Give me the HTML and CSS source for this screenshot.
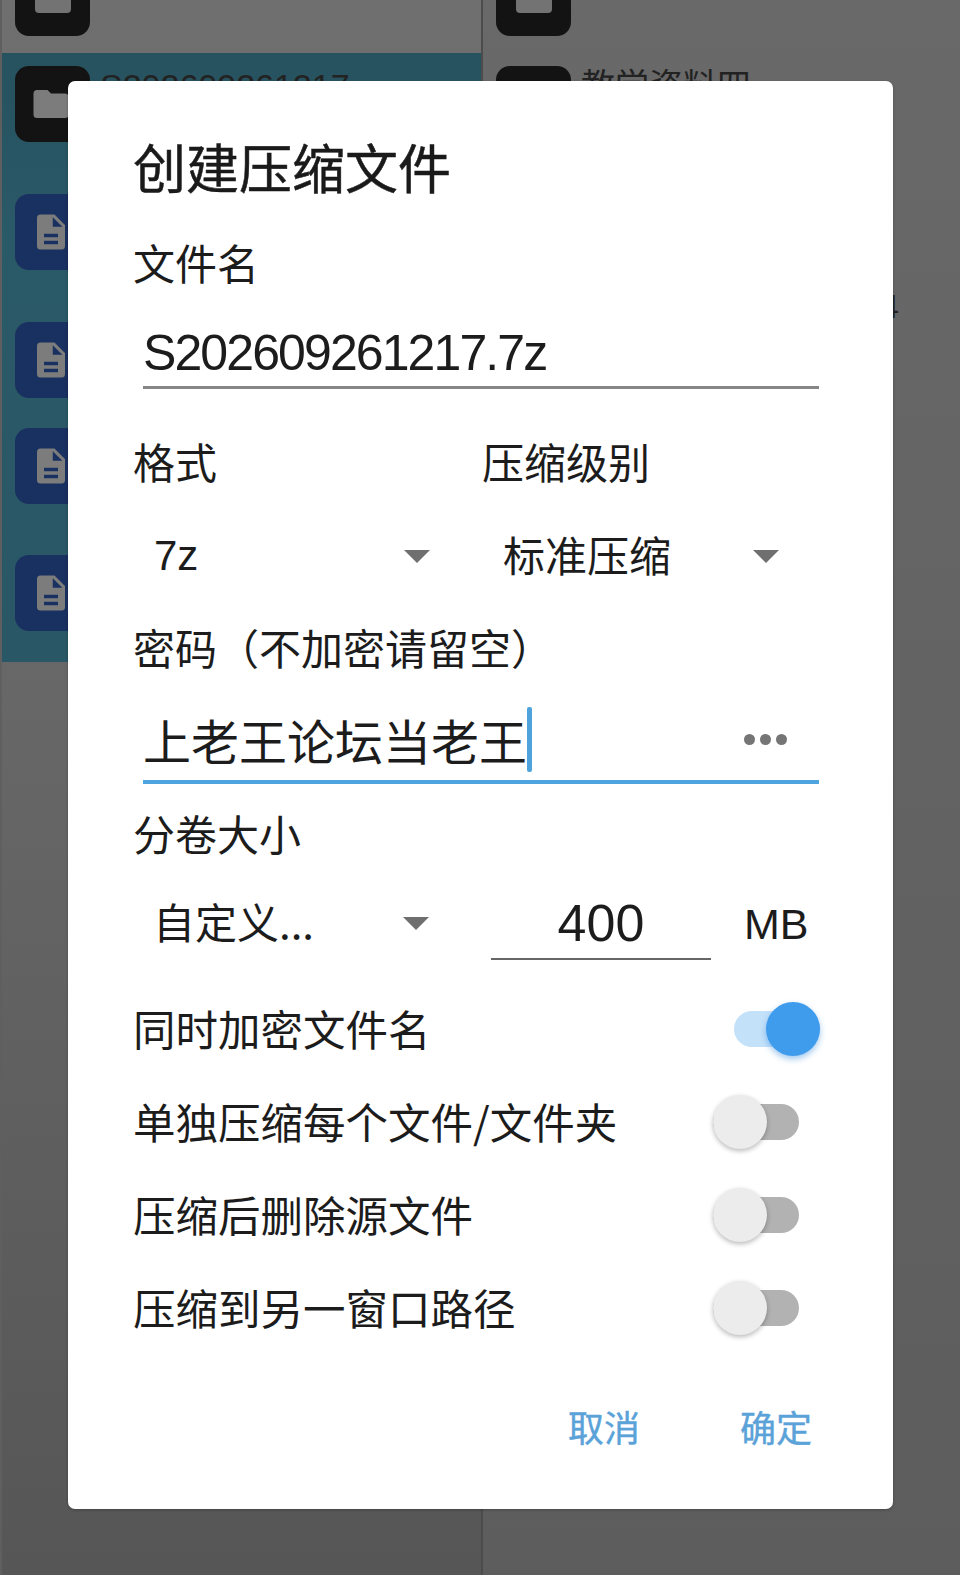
FILE: index.html
```html
<!DOCTYPE html>
<html lang="zh-CN">
<head>
<meta charset="utf-8">
<title>创建压缩文件</title>
<link rel="stylesheet" href="styles.css">
</head>
<body>
<div class="screen">
  <div class="pane pane-left">
    <div class="row row-top"><div class="tile tile-black tile-cut"><span class="notch"></span></div></div>
    <div class="selected">
      <div class="row row-folder">
        <div class="tile tile-black">
          <svg class="glyph" viewBox="0 0 24 24"><path d="M10 4H4a2 2 0 0 0-2 2v12a2 2 0 0 0 2 2h16a2 2 0 0 0 2-2V8a2 2 0 0 0-2-2h-8z"/></svg>
        </div>
        <div class="name">S202609261217</div>
      </div>
      <div class="row row-doc"><div class="tile tile-navy"><svg class="glyph" viewBox="0 0 24 24"><path fill-rule="evenodd" d="M6 2a2 2 0 0 0-2 2v16a2 2 0 0 0 2 2h12a2 2 0 0 0 2-2V8l-6-6zm2 11h8v2H8zm0 4h8v2H8zm5-13.500L18.500 9H13z"/></svg></div></div>
      <div class="row row-doc row-gap-a"><div class="tile tile-navy"><svg class="glyph" viewBox="0 0 24 24"><path fill-rule="evenodd" d="M6 2a2 2 0 0 0-2 2v16a2 2 0 0 0 2 2h12a2 2 0 0 0 2-2V8l-6-6zm2 11h8v2H8zm0 4h8v2H8zm5-13.500L18.500 9H13z"/></svg></div></div>
      <div class="row row-doc row-gap-b"><div class="tile tile-navy"><svg class="glyph" viewBox="0 0 24 24"><path fill-rule="evenodd" d="M6 2a2 2 0 0 0-2 2v16a2 2 0 0 0 2 2h12a2 2 0 0 0 2-2V8l-6-6zm2 11h8v2H8zm0 4h8v2H8zm5-13.500L18.500 9H13z"/></svg></div></div>
      <div class="row row-doc row-gap-c"><div class="tile tile-navy"><svg class="glyph" viewBox="0 0 24 24"><path fill-rule="evenodd" d="M6 2a2 2 0 0 0-2 2v16a2 2 0 0 0 2 2h12a2 2 0 0 0 2-2V8l-6-6zm2 11h8v2H8zm0 4h8v2H8zm5-13.500L18.500 9H13z"/></svg></div></div>
    </div>
  </div>
  <div class="pane pane-right">
    <div class="row row-top"><div class="tile tile-black tile-cut"><span class="notch"></span></div></div>
    <div class="row row-folder">
      <div class="tile tile-black"></div>
      <div class="name">教学资料四</div>
    </div>
    <div class="meta">2026-09-26 12:14</div>
  </div>
</div>

<div class="dialog">
  <h1 class="title">创建压缩文件</h1>
  <div class="label label-name">文件名</div>
  <div class="field field-name"><span class="value">S202609261217.7z</span></div>

  <div class="two-col labels-format">
    <div class="label">格式</div>
    <div class="label">压缩级别</div>
  </div>
  <div class="two-col selects">
    <div class="select select-format"><span>7z</span><i class="caret"></i></div>
    <div class="select select-level"><span>标准压缩</span><i class="caret"></i></div>
  </div>

  <div class="label label-password">密码（不加密请留空）</div>
  <div class="field field-password">
    <span class="value">上老王论坛当老王</span><span class="cursor"></span>
    <span class="dots"><b></b><b></b><b></b></span>
  </div>

  <div class="label label-split">分卷大小</div>
  <div class="split-row">
    <div class="select select-split"><span>自定义...</span><i class="caret"></i></div>
    <div class="size-input">400</div>
    <div class="unit">MB</div>
  </div>

  <div class="option option-first"><span>同时加密文件名</span><span class="switch switch-on"><i></i></span></div>
  <div class="option"><span>单独压缩每个文件/文件夹</span><span class="switch"><i></i></span></div>
  <div class="option"><span>压缩后删除源文件</span><span class="switch"><i></i></span></div>
  <div class="option"><span>压缩到另一窗口路径</span><span class="switch"><i></i></span></div>

  <div class="actions">
    <span class="action">取消</span>
    <span class="action">确定</span>
  </div>
</div>
</body>
</html>
```
FILE: styles.css
```css
* { box-sizing: border-box; }
html, body { margin: 0; padding: 0; }
body {
  width: 960px;
  height: 1577px;
  overflow: hidden;
  position: relative;
  background: #fff;
  font-family: "Liberation Sans", "Noto Sans CJK SC", sans-serif;
  color: #1c1c1c;
}

/* dimmed file manager behind the dialog */
.screen {
  display: flex;
  height: 1575px;
  padding-left: 2px;
  background: #5f5f5f;
}
.pane { height: 100%; overflow: hidden; }
.pane-left {
  width: 481px;
  background: linear-gradient(#6f6f6f, #676767 45%, #565656);
  border-right: 2px solid #4c4c4c;
}
.pane-right {
  flex: 1;
  background: linear-gradient(#696969, #636363 45%, #5d5d5d);
}
.row { display: flex; padding-left: 13px; }
.row-top { height: 53px; }
.tile {
  width: 75px;
  height: 76px;
  border-radius: 14px;
  flex: none;
  display: flex;
  align-items: center;
  justify-content: center;
}
.tile-black { background: #131313; }
.tile-navy { background: #193160; }
.tile-cut {
  height: 36px;
  border-radius: 0 0 14px 14px;
}
.notch {
  display: block;
  width: 36px;
  height: 13px;
  margin-bottom: 23px;
  background: #737373;
  border-radius: 0 0 4px 4px;
}
.glyph { width: 42px; height: 42px; margin-right: 4px; fill: #7c7c7c; }
.selected {
  height: 609px;
  background: linear-gradient(#27525f, #2a5968 30%, #2a5765);
}
.row-folder { padding-top: 13px; height: 141px; gap: 10px; }
.name { font-size: 34px; line-height: 40px; color: #222; white-space: nowrap; }
.row-doc { height: 76px; }
.row-gap-a { margin-top: 52px; }
.row-gap-b { margin-top: 30px; }
.row-gap-c { margin-top: 51px; }
.meta {
  margin-top: 92px;
  padding-right: 61px;
  font-size: 34px;
  line-height: 40px;
  text-align: right;
  color: #222;
  white-space: nowrap;
}

/* dialog */
.dialog {
  position: absolute;
  left: 68px;
  top: 81px;
  width: 825px;
  height: 1428px;
  padding: 53px 0 0 65px;
  background: #fff;
  border-radius: 7px;
  box-shadow: 0 1px 3px rgba(0, 0, 0, .25);
  font-family: "Noto Sans CJK SC", "Liberation Sans", sans-serif;
}
.title {
  margin: 0;
  height: 64px;
  font-size: 53px;
  font-weight: 400;
  line-height: 64px;
  color: #1a1a1a;
  -webkit-text-stroke: 0.5px #1a1a1a;
}
.label { font-size: 42px; line-height: 52px; height: 52px; white-space: nowrap; }
.label-name { margin-top: 38px; }
.field {
  position: relative;
  width: 676px;
  margin-left: 10px;
  display: flex;
  align-items: center;
  white-space: nowrap;
}
.field-name {
  margin-top: 40px;
  height: 61px;
  border-bottom: 3px solid #868686;
  font-family: "Liberation Sans", sans-serif;
  font-size: 50px;
  letter-spacing: -1.9px;
  padding-bottom: 8px;
}
.two-col { display: flex; }
.two-col > * { width: 349px; flex: none; }
.labels-format { margin-top: 46px; }
.selects { margin-top: 43px; height: 52px; }
.select {
  display: flex;
  align-items: center;
  justify-content: space-between;
  font-size: 42px;
  line-height: 52px;
  white-space: nowrap;
}
.select-format { padding: 0 52px 0 21px; font-family: "Liberation Sans", sans-serif; }
.select-level { padding: 0 52px 0 21px; }
.select-level span { margin-top: -4px; }
.caret {
  width: 0;
  height: 0;
  border-left: 13px solid transparent;
  border-right: 13px solid transparent;
  border-top: 13px solid #6f6f6f;
}
.label-password { margin-top: 39px; }
.field-password {
  margin-top: 36px;
  height: 75px;
  border-bottom: 4px solid #4ea4de;
  font-size: 48px;
  padding-bottom: 11px;
}
.cursor {
  display: block;
  width: 5px;
  height: 65px;
  margin-left: 0;
  background: #4fa3dc;
  border-radius: 2px;
}
.dots {
  margin-left: auto;
  margin-right: 32px;
  display: flex;
  gap: 5px;
}
.dots b {
  display: block;
  width: 11px;
  height: 11px;
  border-radius: 50%;
  background: #757575;
}
.label-split { margin-top: 23px; }
.split-row { display: flex; align-items: center; height: 68px; margin-top: 33px; }
.select-split { width: 298px; padding: 0 2px 10px 20px; }
.select-split .caret { margin-top: 4px; }
.size-input {
  width: 220px;
  height: 68px;
  margin-left: 60px;
  border-bottom: 2px solid #666;
  text-align: center;
  font-family: "Liberation Sans", sans-serif;
  font-size: 52px;
  line-height: 62px;
}
.unit {
  margin-left: 33px;
  padding-bottom: 4px;
  font-family: "Liberation Sans", sans-serif;
  font-size: 43px;
}
.option {
  display: flex;
  align-items: center;
  justify-content: space-between;
  width: 666px;
  height: 93px;
  font-size: 42.500px;
  white-space: nowrap;
}
.option-first { margin-top: 21px; }
.switch {
  position: relative;
  display: block;
  width: 86px;
  height: 36px;
  margin-top: 3px;
  border-radius: 18px;
  background: #b2b2b2;
}
.switch i {
  position: absolute;
  left: 0;
  top: -9px;
  width: 54px;
  height: 54px;
  border-radius: 50%;
  background: #ececec;
  box-shadow: 0 2px 5px rgba(0, 0, 0, .28);
}
.switch-on {
  background: #c4e1fa;
  transform: translateX(21px);
}
.switch-on i {
  left: 32px;
  background: #3f9bec;
  box-shadow: 0 3px 6px rgba(40, 130, 220, .45);
}
.actions {
  display: flex;
  justify-content: flex-end;
  gap: 100px;
  width: 679px;
  margin-top: 51px;
  font-size: 36px;
  line-height: 44px;
  color: #5aa2d8;
  -webkit-text-stroke: 0.4px #5aa2d8;
}
```
